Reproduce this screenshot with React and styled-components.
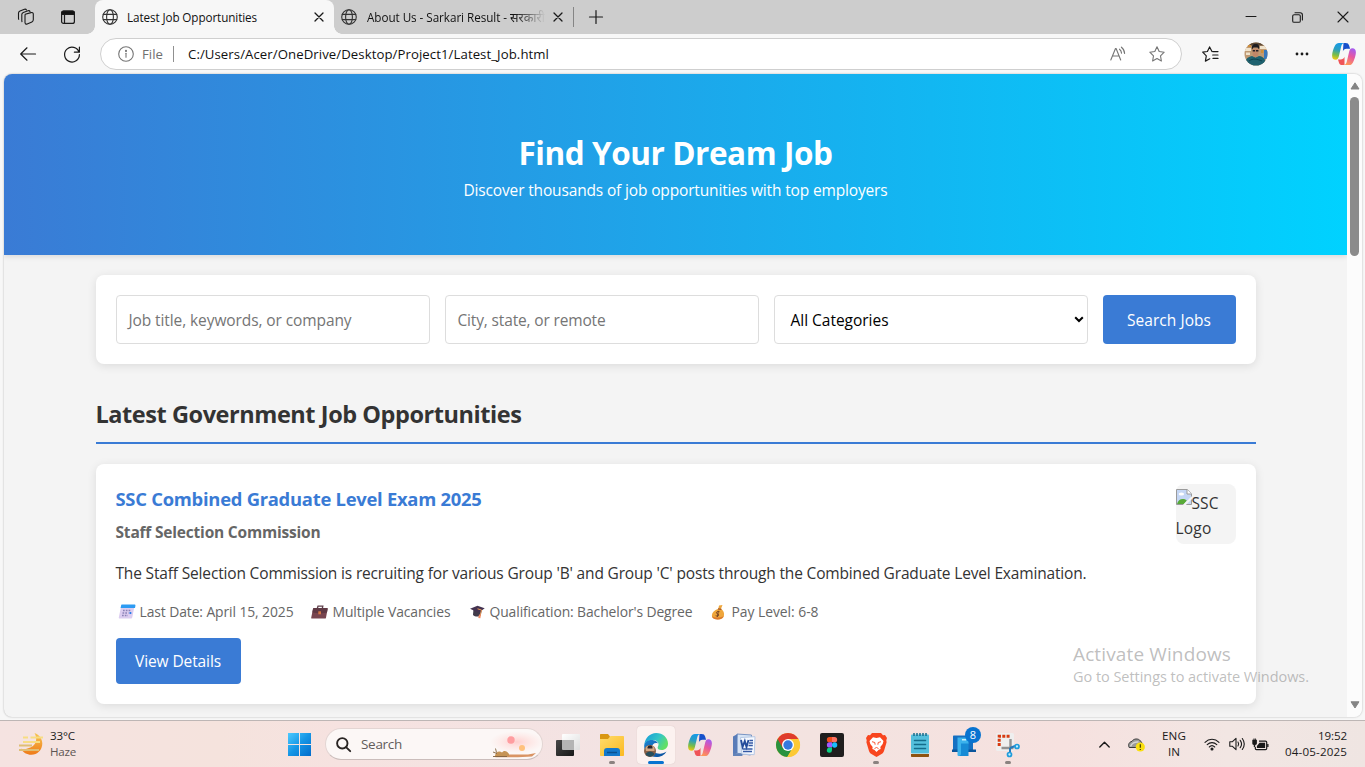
import React, { useLayoutEffect, useRef, useState } from "react";
import styled, { createGlobalStyle } from "styled-components";

const GlobalStyle = createGlobalStyle`
  *, *::before, *::after { box-sizing: border-box; }
  html, body { margin: 0; padding: 0; overflow: hidden; }
  body {
    font-family: "Segoe UI", "Open Sans", "Noto Sans", sans-serif;
    font-size: 15.5px;
    color: #333;
  }
  svg { display: block; flex: none; overflow: visible; }
`;

/* ---------- text tracked to a given run width ---------- */

const Run = styled.span`
  display: inline-block;
  white-space: pre;
`;

function Tracked({ width, children }) {
  const ref = useRef(null);
  const [spacing, setSpacing] = useState(0);
  useLayoutEffect(() => {
    const natural = ref.current.getBoundingClientRect().width;
    setSpacing((width - natural) / String(children).length);
  }, [width, children]);
  return (
    <Run ref={ref} style={{ letterSpacing: `${spacing}px` }}>
      {children}
    </Run>
  );
}

/* ---------- browser chrome ---------- */

const Desktop = styled.div`
  width: 1365px;
  height: 767px;
  display: flex;
  flex-direction: column;
  background: #f7f7f7;
  overflow: hidden;
  position: relative;
`;

const TabStrip = styled.div`
  height: 34px;
  flex: none;
  display: flex;
  align-items: center;
  background: #cdcdcd;
  font-size: 11.7px;
  color: #111;
`;

const StripIcons = styled.div`
  width: 95px;
  padding-left: 17px;
  display: flex;
  gap: 25px;
`;

const Tab = styled.div`
  position: relative;
  height: 34px;
  width: 239px;
  padding-left: 7px;
  padding-right: ${(p) => (p.$active ? 11 : 9)}px;
  display: flex;
  align-items: center;
  border-radius: 8px 8px 0 0;
  background: ${(p) => (p.$active ? "#f7f7f7" : "transparent")};

  ${(p) =>
    p.$active &&
    `
    &::before, &::after {
      content: "";
      position: absolute;
      bottom: 0;
      width: 8px;
      height: 8px;
    }
    &::before { left: -8px; background: radial-gradient(circle at 0 0, #cdcdcd 7.5px, #f7f7f7 8px); }
    &::after { right: -8px; background: radial-gradient(circle at 100% 0, #cdcdcd 7.5px, #f7f7f7 8px); }
  `}
`;

const TabTitle = styled.div`
  flex: 1;
  margin-left: 9px;
  height: 20px;
  line-height: 20px;
  white-space: nowrap;
  ${(p) =>
    p.$fade &&
    `flex: none; width: 184px; margin-left: 10px; margin-right: 3px; mask-image: linear-gradient(to right, #000 80%, transparent 97%);`}
`;

const Devanagari = styled.span`
  font-size: 12.6px;
  line-height: 18px;
`;

const TabDivider = styled.div`
  width: 1px;
  height: 20px;
  background: #858585;
`;

const NewTab = styled.div`
  width: 43px;
  display: flex;
  justify-content: center;
`;

const WindowControls = styled.div`
  margin-left: auto;
  display: flex;
`;

const WindowButton = styled.div`
  width: 46px;
  height: 34px;
  padding-left: 2px;
  display: flex;
  align-items: center;
  justify-content: center;
`;

const Toolbar = styled.div`
  height: 40px;
  flex: none;
  display: flex;
  align-items: center;
  padding-left: 6px;
`;

const ToolButton = styled.div`
  width: ${(p) => p.$width || 44}px;
  display: flex;
  justify-content: center;
  align-items: center;
`;

const AddressBar = styled.div`
  width: 1082px;
  height: 32px;
  margin-left: 6px;
  margin-right: 6px;
  padding: 0 16px 0 17px;
  border: 1px solid #cfcfcf;
  border-radius: 16px;
  background: #fff;
  display: flex;
  align-items: center;
  font-size: 13.2px;
`;

const Scheme = styled.span`
  margin-left: 8px;
  color: #707070;
`;

const AddressDivider = styled.div`
  width: 1px;
  height: 16px;
  margin: 0 14px 0 10px;
  background: #909090;
`;

const Url = styled.span`
  flex: 1;
  color: #111;
`;

const AddressActions = styled.div`
  display: flex;
  gap: 23px;
`;

/* ---------- page ---------- */

const Viewport = styled.div`
  height: 643px;
  flex: none;
  margin: 0 3px 0 4px;
  display: flex;
  border-radius: 8px;
  overflow: hidden;
  background: #f4f4f4;
  box-shadow: 0 0 2px rgba(0, 0, 0, 0.3);
`;

const Page = styled.div`
  width: 1343px;
  height: 643px;
  overflow: hidden;
`;

const Hero = styled.header`
  height: 181px;
  padding-top: 55px;
  text-align: center;
  color: #fff;
  background: linear-gradient(to right, #3a7bd5, #00d2ff);
  box-shadow: 0 2px 5px rgba(0, 0, 0, 0.1);
`;

const HeroTitle = styled.h1`
  margin: 0;
  height: 48px;
  line-height: 48px;
  font-size: 31.5px;
  font-weight: 700;
`;

const HeroText = styled.p`
  margin: 0;
  height: 26px;
  line-height: 26px;
`;

const Container = styled.main`
  width: 1160px;
  margin: 20px auto 0;
`;

const Panel = styled.section`
  background: #fff;
  border-radius: 8px;
  box-shadow: 0 2px 10px rgba(0, 0, 0, 0.1);
  padding: 20px;
`;

const SearchPanel = styled(Panel)`
  height: 89px;
  display: flex;
  gap: 15px;
`;

const Field = styled.div`
  width: 314px;
  height: 49px;
  padding: 0 ${(p) => (p.$select ? 3 : 12)}px 0 ${(p) => (p.$select ? 16 : 12)}px;
  display: flex;
  align-items: center;
  justify-content: space-between;
  border: 1px solid #ddd;
  border-radius: 4px;
  color: ${(p) => (p.$select ? "#000" : "#757575")};
`;

const Button = styled.button`
  width: ${(p) => p.$width}px;
  height: ${(p) => p.$height}px;
  padding: 0;
  border: 0;
  border-radius: 4px;
  background: #3a7bd5;
  color: #fff;
  font: inherit;
`;

const SectionTitle = styled.h2`
  margin: 31px 0 20px;
  height: 49px;
  line-height: 38px;
  border-bottom: 2px solid #3a7bd5;
  font-size: 23.5px;
  font-weight: 700;
  color: #333;
`;

const JobCard = styled(Panel)`
  height: 240px;
  display: flex;
  justify-content: space-between;
`;

const JobTitle = styled.h3`
  margin: 0;
  height: 30px;
  line-height: 29px;
  font-size: 18.4px;
  font-weight: 700;
  color: #3a7bd5;
`;

const Company = styled.div`
  margin-top: 5px;
  height: 26px;
  line-height: 26px;
  font-weight: 700;
  color: #666;
`;

const Description = styled.p`
  margin: 15px 0 14px;
  height: 26px;
  line-height: 26px;
`;

const MetaRow = styled.div`
  height: 23px;
  margin-bottom: 15px;
  display: flex;
  align-items: center;
  font-size: 13.9px;
  color: #666;
`;

const Meta = styled.div`
  width: ${(p) => p.$width}px;
  flex: none;
  display: flex;
  align-items: center;
`;

const MetaIcon = styled.div`
  width: ${(p) => p.$width}px;
  padding-left: 2px;
`;

const Logo = styled.div`
  width: 60px;
  height: 60px;
  padding-top: 5px;
  border-radius: 8px;
  background: #f4f4f4;
  line-height: 28px;
`;

const LogoLine = styled.div`
  height: 25px;
  display: flex;
`;

const ScrollTrack = styled.div`
  flex: 1;
  display: flex;
  flex-direction: column;
  align-items: center;
  padding: 8px 0 8px;
  background: #fcfcfc;
`;

const ScrollThumb = styled.div`
  width: 9px;
  height: 159px;
  margin: 7px 0 auto;
  border-radius: 5px;
  background: #8b8b8b;
`;

const Watermark = styled.div`
  position: absolute;
  left: 1073px;
  top: 641px;
  color: rgba(130, 130, 130, 0.52);
`;

const WatermarkLine = styled.div`
  height: ${(p) => p.$height}px;
  line-height: ${(p) => p.$height}px;
  font-size: ${(p) => p.$size}px;
`;

/* ---------- taskbar ---------- */

const Taskbar = styled.div`
  height: 47px;
  margin-top: auto;
  flex: none;
  display: flex;
  align-items: center;
  border-top: 1px solid #bdb6b5;
  background: linear-gradient(90deg, #f5e3e1 0, #f5e3dd 16%, #f6e2e0 25%, #f3e3e3 45%, #f3e3e0 60%, #f6e1df 78%, #f2e6e3 90%, #efe5e2 100%);
  font-size: 11.6px;
  color: #1b1b1b;
`;

const Weather = styled.div`
  width: 278px;
  padding-left: 19px;
  display: flex;
  align-items: center;
  gap: 6px;
`;

const Stack = styled.div`
  display: flex;
  flex-direction: column;
  align-items: ${(p) => p.$align || "flex-start"};
  line-height: 16px;
`;

const Muted = styled.span`
  color: #5d5553;
`;

const Start = styled.div`
  width: 47px;
  padding: 1px 0 0 10px;
`;

const SearchPill = styled.div`
  width: 218px;
  height: 32px;
  padding-left: 10px;
  display: flex;
  align-items: center;
  border: 1px solid #e3d5d3;
  border-bottom-color: #cbbdbb;
  border-radius: 16px;
  background: #fcf7f6;
  font-size: 13.5px;
  color: #625c5b;
  overflow: hidden;
`;

const SearchLabel = styled.span`
  margin-left: 10px;
  flex: 1;
`;

const Apps = styled.div`
  margin-left: 3px;
  display: flex;
`;

const AppSlot = styled.div`
  position: relative;
  width: 38px;
  height: 38px;
  margin: 2px 3px 0;
  display: flex;
  align-items: center;
  justify-content: center;
  border-radius: 4px;
  background: ${(p) => (p.$active ? "#fcf2f0" : "transparent")};
  box-shadow: ${(p) => (p.$active ? "0 0 1px #cdbcb9" : "none")};
`;

const Indicator = styled.span`
  position: absolute;
  bottom: 0;
  left: ${(p) => (p.$active ? 11 : 16)}px;
  width: ${(p) => (p.$active ? 16 : 6)}px;
  height: 3px;
  border-radius: 2px;
  background: ${(p) => (p.$active ? "#0873d0" : "#8b8280")};
`;

const Badge = styled.span`
  position: absolute;
  top: 1px;
  right: 2px;
  width: 16px;
  height: 16px;
  border-radius: 50%;
  background: #0873d0;
  color: #fff;
  font-size: 11px;
  line-height: 16px;
  text-align: center;
`;

const Tray = styled.div`
  margin-left: auto;
  width: 267px;
  display: flex;
  align-items: center;
`;

const TrayCell = styled.div`
  width: ${(p) => p.$width}px;
  display: flex;
  justify-content: ${(p) => p.$justify || "center"};
`;

/* ---------- icons ---------- */

const Stroke = ({ w = 16, h = 16, sw = 1, c = "#1a1a1a", children }) => (
  <svg width={w} height={h} viewBox={`0 0 ${w} ${h}`} fill="none" stroke={c} strokeWidth={sw} strokeLinecap="round" strokeLinejoin="round">
    {children}
  </svg>
);

const Workspaces = () => (
  <Stroke w={18} h={18} sw={1.1}>
    <path d="M8.2 6.2 14 4.6c1.300-.3 2.300.3 2.300 1.500v5.700c0 1-.5 1.700-1.400 2.100l-4.700 2c-1.200.5-2.200 0-2.200-1.300V7.800c0-.8.2-1.300.2-1.600Z" />
    <path d="M5 13.600c-.2-.3-.2-.6-.2-1V6.500c0-1 .5-1.700 1.500-2.100L11 2.700c1-.3 1.700 0 2 .8" />
    <path d="M1.700 11.300c-.2-.3-.2-.6-.2-1V5c0-1 .5-1.700 1.500-2.100L7.500 1.200c1-.3 1.600 0 2 .7" />
  </Stroke>
);

const TabActions = () => (
  <Stroke w={16} h={18} sw={1.2}>
    <rect x="1.600" y="3.100" width="12.800" height="12.300" rx="2" />
    <path d="M1.600 6.300V5a2 2 0 0 1 2-2h8.800a2 2 0 0 1 2 2v1.300Z" fill="#111" />
    <path d="M4.500 6.500v8.500" />
  </Stroke>
);

const Globe = () => (
  <Stroke w={16} h={16} sw={1.1} c="#333">
    <circle cx="8" cy="8" r="7.300" />
    <ellipse cx="8" cy="8" rx="3.400" ry="7.300" />
    <path d="M1.300 5.400h13.400M1.300 10.600h13.400" />
  </Stroke>
);

const Cross = ({ size = 8, sw = 1.3 }) => (
  <Stroke w={size} h={size} sw={sw}>
    <path d={`M0 0 ${size} ${size}M${size} 0 0 ${size}`} />
  </Stroke>
);

const Plus = () => (
  <Stroke w={14} h={14} sw={1.2}>
    <path d="M7 .5v13M.5 7h13" />
  </Stroke>
);

const Restore = () => (
  <Stroke w={11} h={11} sw={1.1}>
    <rect x=".7" y="2.700" width="7.600" height="7.600" rx="1.400" />
    <path d="M3 .7h5.200c1.300 0 2.200.9 2.200 2.200V8" />
  </Stroke>
);

const BackArrow = () => (
  <Stroke w={16} h={14} sw={1.2}>
    <path d="M15.500 7H.8M7 .8.7 7 7 13.200" />
  </Stroke>
);

const Reload = () => (
  <Stroke w={16} h={16} sw={1.2}>
    <path d="M15 6.200A7.400 7.400 0 1 0 15.400 8.500M15.400 1.200v5h-5" />
  </Stroke>
);

const Info = () => (
  <Stroke w={16} h={16} sw={1.1} c="#757575">
    <circle cx="8" cy="8" r="7.300" />
    <path d="M8 7.300v4" />
    <circle cx="8" cy="4.900" r=".5" fill="#757575" />
  </Stroke>
);

const ReadAloud = () => (
  <Stroke w={16} h={16} sw={1.1} c="#757575">
    <path d="M.8 14 5.500 2.500h.6L10.700 14M2.500 10h6.500M9.500 3.200c1.300.9 1.900 2.200 2 3.900M11.400 1.200c2 1.500 3 3.300 3.200 6.200" />
  </Stroke>
);

const STAR = "M8 .8l2.200 4.700 5 .7-3.700 3.600.9 5.200L8 12.600 3.600 15l.9-5.200L.8 6.200l5-.7Z";

const Star = () => (
  <Stroke w={16} h={16} sw={1.1} c="#757575">
    <path d={STAR} />
  </Stroke>
);

const Favorites = () => (
  <Stroke w={17} h={16} sw={1.2}>
    <path d="M10 5.600 7.600.9 5.400 5.500.7 6.200l3.600 3.600-.9 5.300 4.400-2.300M11 5.600h5M10.700 9h5.300M11 12.400h5" />
  </Stroke>
);

const Avatar = () => (
  <svg width="24" height="24" viewBox="0 0 24 24">
    <defs>
      <clipPath id="avatarClip"><circle cx="12" cy="12" r="11.500" /></clipPath>
    </defs>
    <g clipPath="url(#avatarClip)">
      <rect width="24" height="24" fill="#c09a74" />
      <path d="M0 0h24v3.500H0z" fill="#5b4835" />
      <path d="M1 6h6v3H1zM16 4h6v3h-6zM2 10.500h4v2.500H2z" fill="#f0e3cc" />
      <path d="M4 3h3v2H4zM17 8h2.500v3H17z" fill="#cf8e3a" />
      <path d="M20 8h4v9h-4z" fill="#3978bd" />
      <path d="M2 24c-2-6 1-9 6-10l3.500 1.500L15 14c5 .5 8 4.500 6 10Z" fill="#1f6270" />
      <path d="M8.500 6.500h6v5.500c0 2-1.300 3.200-3 3.200s-3-1.200-3-3.200Z" fill="#c28768" />
      <path d="M8 7.500C7.300 3.700 9 2 11.800 2s4.200 2 3.200 5.300L13.500 5.500h-4Z" fill="#1d1b20" />
      <path d="M8.700 8h2.400v1.500H8.700zM12 8h2.400v1.500H12z" fill="#272127" />
      <path d="M5 19c4-3 8-2 13 0" stroke="#10434f" fill="none" />
    </g>
  </svg>
);

const Dots = () => (
  <svg width="14" height="4" viewBox="0 0 14 4" fill="#1a1a1a">
    <circle cx="2" cy="2" r="1.400" /><circle cx="7" cy="2" r="1.400" /><circle cx="12" cy="2" r="1.400" />
  </svg>
);

const Copilot = ({ id }) => (
  <svg width="24" height="22" viewBox="0 0 24 22">
    <defs>
      <linearGradient id={`${id}a`} x1=".5" y1="0" x2=".3" y2="1">
        <stop offset="0" stopColor="#159ae8" /><stop offset=".4" stopColor="#2a9fc0" /><stop offset=".72" stopColor="#7abd48" /><stop offset="1" stopColor="#f3c811" />
      </linearGradient>
      <linearGradient id={`${id}b`} x1=".7" y1="0" x2=".3" y2="1">
        <stop offset="0" stopColor="#a55cf0" /><stop offset=".45" stopColor="#e8589f" /><stop offset="1" stopColor="#ff9a52" />
      </linearGradient>
    </defs>
    <path d="M11.500 0h2c2.300 0 3 .8 3.600 2.600l1 3.200h-3.600c-2 0-3 1-3.600 2.800Z" fill="#1650cb" />
    <path d="M13 0c-2.300 0-3.100 1.200-3.700 3L6.800 13.500c-.5 2-1.200 3-3 3.300C1 16.800.1 15 .1 12.400.1 9.600 1.700 5 2.900 2.800 4 .8 5 0 7 0Z" fill={`url(#${id}a)`} />
    <path d="M12.500 22h-2c-2.300 0-3-.8-3.600-2.600L6 16.500h2.500c2 0 3.400-1 4-2.800Z" fill="#ef5458" />
    <path d="M11 22c2.300 0 3.100-1.200 3.700-3l2.500-10.500c.5-2 1.200-3 3-3.300 2.800 0 3.700 1.800 3.700 4.400 0 2.800-1.600 7.400-2.800 9.600-1.100 2-2.100 2.800-4.100 2.800Z" fill={`url(#${id}b)`} />
  </svg>
);

const SelectChevron = () => (
  <Stroke w={10} h={7} sw={2} c="#000">
    <path d="M1.200 1.200 5 5l3.800-3.800" strokeLinecap="butt" strokeLinejoin="miter" />
  </Stroke>
);

const CalendarIcon = () => (
  <svg width="18" height="15" viewBox="0 0 18 15">
    <path d="M3 3h13.300l-2 10.300c-.2.800-.6 1.200-1.400 1.200H1.800c-.8 0-1.200-.5-1-1.300Z" fill="#dccdf0" />
    <path d="M4 .6h12.300c.9 0 1.300.5 1.100 1.300L17 4H2.600l.4-2c.2-.9.500-1.400 1-1.400Z" fill="#2d9bf3" />
    <path d="M5 6.500h8M4.500 9h6M4 11.500h6" stroke="#8c83b6" strokeWidth="1.500" strokeDasharray="1.700 1.100" />
    <path d="M11.500 9h1.800" stroke="#267dea" strokeWidth="2.200" />
  </svg>
);

const BriefcaseIcon = () => (
  <svg width="17" height="14" viewBox="0 0 17 14">
    <path d="M6.300 3.500 7 1.200h4.800l-.5 2.300" fill="none" stroke="#60414c" strokeWidth="1.300" />
    <path d="M3 3h12.700c.7 0 1 .4.900 1L15 12.700c-.1.600-.5.900-1.100.9H1c-.6 0-.9-.3-.8-.9L2 4c.1-.6.400-1 1-1Z" fill="#78454f" />
    <path d="M3 3h12.700c.7 0 1 .4.900 1L16 7.500l-6.500 1L1.300 7.500 2 4c.1-.6.400-1 1-1Z" fill="#5f3944" />
    <rect x="7.300" y="6.300" width="2.700" height="3" fill="#d57744" />
  </svg>
);

const CapIcon = () => (
  <svg width="16" height="15" viewBox="0 0 16 15">
    <path d="M3.400 6h8.400l-1 5c-2 2-5.500 2-7.800 0Z" fill="#413b4b" />
    <path d="M0 4.800 7.500 1.800l7.200 2.400-6 4.600Z" fill="#443350" />
    <path d="M7.500 4.800 11.500 6 10 12" fill="none" stroke="#eb9a58" strokeWidth="1" />
    <path d="m9 10.500 2 .2-.7 3.600-2-.2Z" fill="#f18a63" />
  </svg>
);

const MoneyIcon = () => (
  <svg width="14" height="16" viewBox="0 0 14 16">
    <path d="M8 1.500 11.500 1 10 4.800c2.500 1.700 3.400 4 3 6.600-.5 2.800-2.500 4-6.300 4S.8 14 .9 11.300C1 8.500 3.400 6.300 7.300 4.800Z" fill="#efa63b" />
    <path d="M1 12c2 2 8 2.300 11.800 0-.9 2.400-2.700 3.400-6.100 3.400C3.200 15.400 1.200 14.300 1 12Z" fill="#da792d" />
    <path d="m7 4.900 3.400.4" stroke="#a1562d" strokeWidth="1.200" />
    <path d="M8.500 7.700c-1.800-.6-3 .1-3 1.100 0 1.400 2.400.9 2.200 2.300-.1 1-1.500 1.300-3 .6M7.400 6.900l-1 6" stroke="#754224" fill="none" />
  </svg>
);

const BrokenImage = () => (
  <svg width="16" height="16" viewBox="0 0 16 16">
    <path d="M.5.500h10.700l4.300 4.300v10.700H.5Z" fill="#c5d7f5" stroke="#9b9b9b" />
    <path d="M11 .5v4.500h4.500" fill="#fff" stroke="#9b9b9b" />
    <ellipse cx="5.400" cy="5" rx="2.700" ry="1.500" fill="#fff" />
    <path d="M1 15c1-3.500 3-5 5.600-5 2.300 0 3.300.6 4.200 1.600L8 15Z" fill="#58aa38" />
    <path d="M7.800 16.500 16.500 8" stroke="#f4f4f4" strokeWidth="2.200" />
  </svg>
);

const ScrollArrow = ({ down }) => (
  <svg width="10" height="8" viewBox="0 0 10 8">
    <path d={down ? "M1 .8h8L5 7Z" : "M1 7h8L5 .8Z"} fill="#858585" stroke="#858585" strokeWidth="1" strokeLinejoin="round" />
  </svg>
);

const HazeIcon = () => (
  <svg width="25" height="24" viewBox="0 0 25 24">
    <defs>
      <linearGradient id="haze" x1="0" y1="0" x2="0" y2="1"><stop offset="0" stopColor="#f6c653" /><stop offset="1" stopColor="#ef7a18" /></linearGradient>
    </defs>
    <path d="M15.500 1c5 2 7.800 6 7.800 10.500 0 6.400-5 11.300-11 11.300-4.500 0-8.300-2.300-10.300-6 6.600 1.300 15.500-2.500 15.200-9.800 0-2.200-.6-4.100-1.700-6Z" fill="url(#haze)" />
    <path d="M4 5.500h5M11.500 5.500H24M4 10h17" stroke="#f7dd83" strokeWidth="2" />
    <path d="M0 13.500h13M0 18h20" stroke="#dfbe74" strokeWidth="2" />
  </svg>
);

const WindowsLogo = () => (
  <svg width="23" height="23" viewBox="0 0 23 23">
    <defs>
      <linearGradient id="win" x1="0" y1="0" x2="1" y2="1"><stop offset="0" stopColor="#4ccaff" /><stop offset=".5" stopColor="#1595e5" /><stop offset="1" stopColor="#036ccb" /></linearGradient>
    </defs>
    <path d="M0 0h11v11H0zM12 0h11v11H12zM0 12h11v11H0zM12 12h11v11H12z" fill="url(#win)" />
  </svg>
);

const Magnifier = () => (
  <Stroke w={15} h={15} sw={1.9} c="#292423">
    <circle cx="6.300" cy="6.300" r="5.200" />
    <path d="m10.300 10.300 3.900 3.900" />
  </Stroke>
);

const SearchArt = () => (
  <svg width="52" height="30" viewBox="0 0 52 30">
    <defs>
      <radialGradient id="glow"><stop offset="0" stopColor="#ffc6c5" stopOpacity=".8" /><stop offset="1" stopColor="#ffd9d5" stopOpacity="0" /></radialGradient>
    </defs>
    <ellipse cx="27" cy="13" rx="27" ry="11" fill="url(#glow)" />
    <circle cx="21" cy="11" r="3.700" fill="#ff9da0" />
    <circle cx="32" cy="19" r="3" fill="#ffc17d" />
    <path d="M3 27.500 20 25.500h18l8-1.500-4 3.500-14 .8H6Z" fill="#d99464" />
    <path d="M5 27c.5-4 4-5.500 7-3.500 1.500-2.500 5-2 7 1.500l.5 2.500Z" fill="#c59355" />
    <path d="M5.500 19.500l1 4M3 23l4 1.500M3 27.500h14" stroke="#80613e" strokeWidth=".9" />
  </svg>
);

const TaskViewIcon = () => (
  <svg width="24" height="22" viewBox="0 0 24 22">
    <defs>
      <linearGradient id="tvd" x1="0" y1="0" x2="1" y2="1"><stop offset="0" stopColor="#474747" /><stop offset="1" stopColor="#181818" /></linearGradient>
      <linearGradient id="tvl" x1="0" y1="0" x2="1" y2="1"><stop offset="0" stopColor="#fff" /><stop offset="1" stopColor="#dedede" /></linearGradient>
    </defs>
    <rect x="6" width="18" height="16" rx="1" fill="url(#tvl)" />
    <rect y="6" width="18" height="16" rx="1" fill="url(#tvd)" />
    <path d="M6 6h12v10H7a1 1 0 0 1-1-1Z" fill="#b4b4b4" />
  </svg>
);

const FolderIcon = () => (
  <svg width="24" height="22" viewBox="0 0 24 22">
    <defs>
      <linearGradient id="fold" x1="0" y1="0" x2="1" y2="1"><stop offset="0" stopColor="#ffdc6c" /><stop offset="1" stopColor="#fbb921" /></linearGradient>
    </defs>
    <path d="M0 1c0-.6.400-1 1-1h7l2 2.500V6H0Z" fill="#d99712" />
    <path d="M0 5h8l2.500-3H23c.6 0 1 .4 1 1v18c0 .6-.4 1-1 1H1c-.6 0-1-.4-1-1Z" fill="url(#fold)" />
    <path d="M4 22v-5a3 3 0 0 1 3-3h10a3 3 0 0 1 3 3v5Z" fill="#1479cb" />
    <path d="M7 18.500h10" stroke="#0a5291" strokeWidth="1.500" />
  </svg>
);

const EdgeIcon = () => (
  <svg width="24" height="24" viewBox="0 0 24 24">
    <defs>
      <linearGradient id="edgeA" x1="0" y1="0" x2="1" y2=".5"><stop offset="0" stopColor="#1599dc" /><stop offset=".6" stopColor="#35c6c5" /><stop offset="1" stopColor="#62df65" /></linearGradient>
      <linearGradient id="edgeB" x1="0" y1="0" x2="1" y2="1"><stop offset="0" stopColor="#1b83d2" /><stop offset="1" stopColor="#0b4e9a" /></linearGradient>
    </defs>
    <path d="M.3 11.500C1 5 6 0 12.200 0 18.800 0 24 4.700 24 10.500c0 4-2.700 6.500-6.300 6.500-3 0-4.500-1.200-4-2.700.4-1.200.8-1.700.8-3C14.500 8.500 11.500 7 8.500 7 4.500 7 1.500 9 .3 11.500Z" fill="url(#edgeA)" />
    <path d="M.2 12C1 8.500 4.500 6.700 8.500 7c3 .2 5 1.800 5.500 3.500-3-1.300-6 .5-6 4 0 4 4.500 7 9.500 6 2-.4 3.500-1 5-2.100C20.500 22 16.500 24 12.300 24 5 24-.5 18.500.2 12Z" fill="url(#edgeB)" />
    <circle cx="6" cy="18" r="6" fill="#896047" />
    <path d="M1.500 15c1-3 7-4 9 0v3H2Z" fill="#d4a783" />
    <path d="M3.500 14.500c.5-3 5-3 5 0v1h-5Z" fill="#28262c" />
    <path d="M1.500 21c2-3.500 7-3.500 9 0-2.500 3.500-6.500 3.500-9 0Z" fill="#284f5d" />
  </svg>
);

const WordIcon = () => (
  <svg width="24" height="24" viewBox="0 0 24 24">
    <path d="M5 1 19.500 2l-1 20L3 20Z" fill="#d7e4f5" stroke="#7894c3" />
    <path d="M1 3.500 5.500 1v19L1 22Z" fill="#597cb8" />
    <path d="M1 20.500h11l-2 2.500H1Z" fill="#6383b8" />
    <path d="m8.500 4.500 14.500-.8-.8 18L10 21Z" fill="#f6f9ff" stroke="#b6c8e4" />
    <path d="m9 7 1.600 7 2.200-6 1.700 6 2-7" fill="none" stroke="#264d9b" strokeWidth="1.900" />
    <path d="M17.500 7.500H21M17 10h4M16.500 12.500h4.300M11 16h9.500M11 18.500h9" stroke="#3459a5" strokeWidth="1.300" />
  </svg>
);

const ChromeIcon = () => (
  <svg width="24" height="24" viewBox="0 0 24 24">
    <circle cx="12" cy="12" r="12" fill="#fcc934" />
    <path d="M12 12 1.600 6A12 12 0 0 0 11.300 24l6-10Z" fill="#29923f" />
    <path d="M1.600 6A12 12 0 0 1 22.400 6H12v8L6.800 15Z" fill="#df3c2d" />
    <path d="M22.400 6A12 12 0 0 1 11.300 24l6-10L15 6Z" fill="#fcc934" />
    <circle cx="12" cy="12" r="6" fill="#fff" />
    <circle cx="12" cy="12" r="4.700" fill="#3579df" />
  </svg>
);

const FigmaIcon = () => (
  <svg width="24" height="24" viewBox="0 0 24 24">
    <rect width="24" height="24" rx="2" fill="#1f1e1e" />
    <path d="M12 4H9.500a2.600 2.600 0 0 0 0 5.300H12Z" fill="#f24e1e" />
    <path d="M12 4h2.500a2.600 2.600 0 0 1 0 5.300H12Z" fill="#ff7262" />
    <path d="M12 9.300H9.500a2.600 2.600 0 0 0 0 5.300H12Z" fill="#a259ff" />
    <circle cx="14.600" cy="12" r="2.650" fill="#1abcfe" />
    <path d="M9.500 14.600H12v2.700a2.600 2.600 0 1 1-2.500-2.700Z" fill="#0acf83" />
  </svg>
);

const BraveIcon = () => (
  <svg width="21" height="24" viewBox="0 0 21 24">
    <path d="M6 0h9l2 2.300 2-.2L21 5l-.7 2.200.3 2L18 18c-.4 1.200-1 2-2 2.700L10.500 24 5 20.700c-1-.7-1.600-1.500-2-2.700L.4 9.200l.3-2L0 5l2-2.900 2 .2Z" fill="#f8451e" />
    <path d="m10.500 5 3.500-.8L17.500 8l-.8 3-2.400 3 .4 2-2 .8-2.200 2.200-2.200-2.200-2-.8.4-2-2.400-3-.8-3L7 4.200Z" fill="#fff" />
    <path d="m6 8.700 2.800.8.300 2.200M15 8.700l-2.800.8-.3 2.200M8.500 15.500l2-1 2 1" fill="none" stroke="#f8451e" strokeWidth=".9" />
  </svg>
);

const NotepadIcon = () => (
  <svg width="18" height="24" viewBox="0 0 18 24">
    <path d="M0 20h18v3c0 .6-.4 1-1 1H1c-.6 0-1-.4-1-1Z" fill="#8f5310" />
    <path d="M0 18h18v3H0Z" fill="#f6f2ec" />
    <rect y="1.500" width="18" height="19" rx="1" fill="#54bfdc" />
    <path d="M3 0v3M6 0v3M9 0v3M12 0v3M15 0v3" stroke="#176c8c" strokeWidth="1.500" />
    <path d="M3.500 7.500h11M3.500 11.500h11M3.500 15.500h11" stroke="#146c8b" strokeWidth="1.500" strokeLinecap="round" />
  </svg>
);

const PhoneLinkIcon = () => (
  <svg width="24" height="24" viewBox="0 0 24 24">
    <path d="M2 2.500h18c.6 0 1 .4 1 1V17H1V3.500c0-.6.400-1 1-1Z" fill="#1470c2" />
    <path d="M0 16.500h24V19H0Z" fill="#0a559b" />
    <path d="M5.500 4.500h11v6l-7 12.500h-3a1 1 0 0 1-1-1Z" fill="#3bb2ec" />
    <path d="M9 10.500h7.500V23H6.500c1.500 0 2.500-1 2.500-2.500Z" fill="#178bd5" />
    <path d="M10 6.800h4" stroke="#eaffff" strokeWidth="1.200" />
  </svg>
);

const SnipIcon = () => (
  <svg width="24" height="24" viewBox="0 0 24 24">
    <rect width="18" height="18" rx="1.500" fill="#efefef" />
    <path d="M3.200 13V3.200H14" fill="none" stroke="#d83b12" strokeWidth="3" strokeDasharray="3 1.300" />
    <path d="M14.500 6v9.500M5.500 15h12" stroke="#939393" strokeWidth="2.400" />
    <path d="m14 15 5-2M14 15v4" stroke="#277aba" strokeWidth="2" />
    <circle cx="21" cy="13.500" r="2" fill="#c6efff" stroke="#209ddc" strokeWidth="1.700" />
    <circle cx="13.500" cy="21.500" r="2" fill="#c6efff" stroke="#209ddc" strokeWidth="1.700" />
  </svg>
);

const TrayChevron = () => (
  <Stroke w={11} h={7} sw={1.4}>
    <path d="M.8 6 5.500 1.200 10.200 6" />
  </Stroke>
);

const OneDriveAlert = () => (
  <svg width="17" height="15" viewBox="0 0 17 15">
    <path d="M1.200 10.500C-.3 8 1 5 4 4.300 5.500 1.500 10.500 1 12.500 4L14 6v4.500Z" fill="#9a9a9a" stroke="#3c3c3c" />
    <path d="M2.500 9.500c1-3 4.500-5 8-4.500" stroke="#d5d5d5" strokeWidth="1.500" fill="none" />
    <circle cx="12.300" cy="10" r="4.600" fill="#f9df10" />
    <path d="M12.300 7.200v3.500M12.300 12v1" stroke="#433c00" strokeWidth="1.200" />
  </svg>
);

const Wifi = () => (
  <Stroke w={16} h={13} sw={1.1}>
    <path d="M1 4.300c4-4 10-4 14 0M3.200 6.700c2.800-2.800 6.800-2.800 9.600 0M5.300 9c1.600-1.600 3.800-1.600 5.400 0" />
    <circle cx="8" cy="11" r="1" fill="#1a1a1a" />
  </Stroke>
);

const Speaker = () => (
  <Stroke w={16} h={14} sw={1.1}>
    <path d="M.8 4.800h2.400L7 1.300v11.400L3.200 9.200H.8ZM9 5c.8 1.300.8 2.700 0 4M11.200 3.300c1.700 2.300 1.700 5.100 0 7.400M13.300 1.500c2.500 3.500 2.500 7.500 0 11" />
  </Stroke>
);

const Battery = () => (
  <svg width="17" height="13" viewBox="0 0 17 13">
    <path d="M7 3.100h6.500c.7 0 1.200.5 1.200 1.200v6.200c0 .7-.5 1.200-1.200 1.200h-9c-.7 0-1.200-.5-1.200-1.200V9" fill="none" stroke="#1a1a1a" strokeWidth="1.200" />
    <path d="M7.500 4.800h5.600V10H4.900V8Z" fill="#1a1a1a" />
    <path d="M15.200 5.900h1.300v3.200h-1.300Z" fill="#1a1a1a" />
    <path d="M1.500.5v1.300H.3v3.500c0 1 .6 1.600 1.500 1.800V9h1.400V7.100c1-.2 1.700-.8 1.700-1.800V1.800H3.800V.5H2.900v1.300h-.5V.5Z" fill="#1a1a1a" />
  </svg>
);

/* ---------- sections ---------- */

const jobFacts = [
  { Icon: CalendarIcon, label: "Last Date: April 15, 2025", text: 154, icon: 24, cell: 193 },
  { Icon: BriefcaseIcon, label: "Multiple Vacancies", text: 118, icon: 24, cell: 159 },
  { Icon: CapIcon, label: "Qualification: Bachelor's Degree", text: 203, icon: 22, cell: 241 },
  { Icon: MoneyIcon, label: "Pay Level: 6-8", text: 87, icon: 23, cell: 120 },
];

const apps = [
  { Icon: TaskViewIcon },
  { Icon: FolderIcon, running: true },
  { Icon: EdgeIcon, running: true, active: true },
  { Icon: Copilot },
  { Icon: WordIcon },
  { Icon: ChromeIcon },
  { Icon: FigmaIcon },
  { Icon: BraveIcon, running: true },
  { Icon: NotepadIcon },
  { Icon: PhoneLinkIcon, badge: 8 },
  { Icon: SnipIcon, running: true },
];

function BrowserChrome() {
  return (
    <>
      <TabStrip>
        <StripIcons>
          <Workspaces />
          <TabActions />
        </StripIcons>
        <Tab $active>
          <Globe />
          <TabTitle><Tracked width={130}>Latest Job Opportunities</Tracked></TabTitle>
          <Cross />
        </Tab>
        <Tab>
          <Globe />
          <TabTitle $fade><Tracked width={143}>About Us - Sarkari Result - </Tracked><Devanagari>सरकारी</Devanagari></TabTitle>
          <Cross />
        </Tab>
        <TabDivider />
        <NewTab><Plus /></NewTab>
        <WindowControls>
          <WindowButton>
            <Stroke w={10} h={2}><path d="M0 .5h10" /></Stroke>
          </WindowButton>
          <WindowButton><Restore /></WindowButton>
          <WindowButton><Cross size={10} sw={1.1} /></WindowButton>
        </WindowControls>
      </TabStrip>
      <Toolbar>
        <ToolButton><BackArrow /></ToolButton>
        <ToolButton><Reload /></ToolButton>
        <AddressBar>
          <Info />
          <Scheme><Tracked width={21}>File</Tracked></Scheme>
          <AddressDivider />
          <Url><Tracked width={361}>C:/Users/Acer/OneDrive/Desktop/Project1/Latest_Job.html</Tracked></Url>
          <AddressActions>
            <ReadAloud />
            <Star />
          </AddressActions>
        </AddressBar>
        <ToolButton><Favorites /></ToolButton>
        <ToolButton $width={48}><Avatar /></ToolButton>
        <ToolButton $width={44}><Dots /></ToolButton>
        <ToolButton $width={40}><Copilot id="side" /></ToolButton>
      </Toolbar>
    </>
  );
}

function JobsPage() {
  return (
    <Viewport>
      <Page>
        <Hero>
          <HeroTitle><Tracked width={314}>Find Your Dream Job</Tracked></HeroTitle>
          <HeroText><Tracked width={424}>Discover thousands of job opportunities with top employers</Tracked></HeroText>
        </Hero>
        <Container>
          <SearchPanel>
            <Field><Tracked width={223}>Job title, keywords, or company</Tracked></Field>
            <Field><Tracked width={148}>City, state, or remote</Tracked></Field>
            <Field $select><Tracked width={98}>All Categories</Tracked><SelectChevron /></Field>
            <Button $width={133} $height={49}><Tracked width={84}>Search Jobs</Tracked></Button>
          </SearchPanel>
          <SectionTitle><Tracked width={426}>Latest Government Job Opportunities</Tracked></SectionTitle>
          <JobCard>
            <div>
              <JobTitle><Tracked width={366}>SSC Combined Graduate Level Exam 2025</Tracked></JobTitle>
              <Company><Tracked width={205}>Staff Selection Commission</Tracked></Company>
              <Description>
                <Tracked width={971}>The Staff Selection Commission is recruiting for various Group 'B' and Group 'C' posts through the Combined Graduate Level Examination.</Tracked>
              </Description>
              <MetaRow>
                {jobFacts.map(({ Icon, label, text, icon, cell }) => (
                  <Meta key={label} $width={cell}>
                    <MetaIcon $width={icon}><Icon /></MetaIcon>
                    <Tracked width={text}>{label}</Tracked>
                  </Meta>
                ))}
              </MetaRow>
              <Button $width={125} $height={46}><Tracked width={86}>View Details</Tracked></Button>
            </div>
            <Logo>
              <LogoLine><BrokenImage /><Tracked width={27}>SSC</Tracked></LogoLine>
              <LogoLine><Tracked width={36}>Logo</Tracked></LogoLine>
            </Logo>
          </JobCard>
        </Container>
      </Page>
      <ScrollTrack>
        <ScrollArrow />
        <ScrollThumb />
        <ScrollArrow down />
      </ScrollTrack>
    </Viewport>
  );
}

function SystemTaskbar() {
  return (
    <Taskbar>
      <Weather>
        <HazeIcon />
        <Stack>
          <Tracked width={25}>33°C</Tracked>
          <Muted><Tracked width={26}>Haze</Tracked></Muted>
        </Stack>
      </Weather>
      <Start><WindowsLogo /></Start>
      <SearchPill>
        <Magnifier />
        <SearchLabel><Tracked width={41}>Search</Tracked></SearchLabel>
        <SearchArt />
      </SearchPill>
      <Apps>
        {apps.map(({ Icon, running, active, badge }, i) => (
          <AppSlot key={i} $active={active}>
            <Icon id={`app${i}`} />
            {running && <Indicator $active={active} />}
            {badge && <Badge>{badge}</Badge>}
          </AppSlot>
        ))}
      </Apps>
      <Tray>
        <TrayCell $width={12}><TrayChevron /></TrayCell>
        <TrayCell $width={52}><OneDriveAlert /></TrayCell>
        <TrayCell $width={24}>
          <Stack $align="center">
            <Tracked width={24}>ENG</Tracked>
            <Tracked width={12}>IN</Tracked>
          </Stack>
        </TrayCell>
        <TrayCell $width={51}><Wifi /></TrayCell>
        <TrayCell $width={0}><Speaker /></TrayCell>
        <TrayCell $width={46}><Battery /></TrayCell>
        <TrayCell $width={64} $justify="flex-end">
          <Stack $align="flex-end">
            <Tracked width={29}>19:52</Tracked>
            <Tracked width={62}>04-05-2025</Tracked>
          </Stack>
        </TrayCell>
      </Tray>
    </Taskbar>
  );
}

export default function App() {
  return (
    <>
      <GlobalStyle />
      <Desktop>
        <BrowserChrome />
        <JobsPage />
        <SystemTaskbar />
        <Watermark>
          <WatermarkLine $height={26} $size={19}><Tracked width={158}>Activate Windows</Tracked></WatermarkLine>
          <WatermarkLine $height={20} $size={14.5}><Tracked width={236}>Go to Settings to activate Windows.</Tracked></WatermarkLine>
        </Watermark>
      </Desktop>
    </>
  );
}
